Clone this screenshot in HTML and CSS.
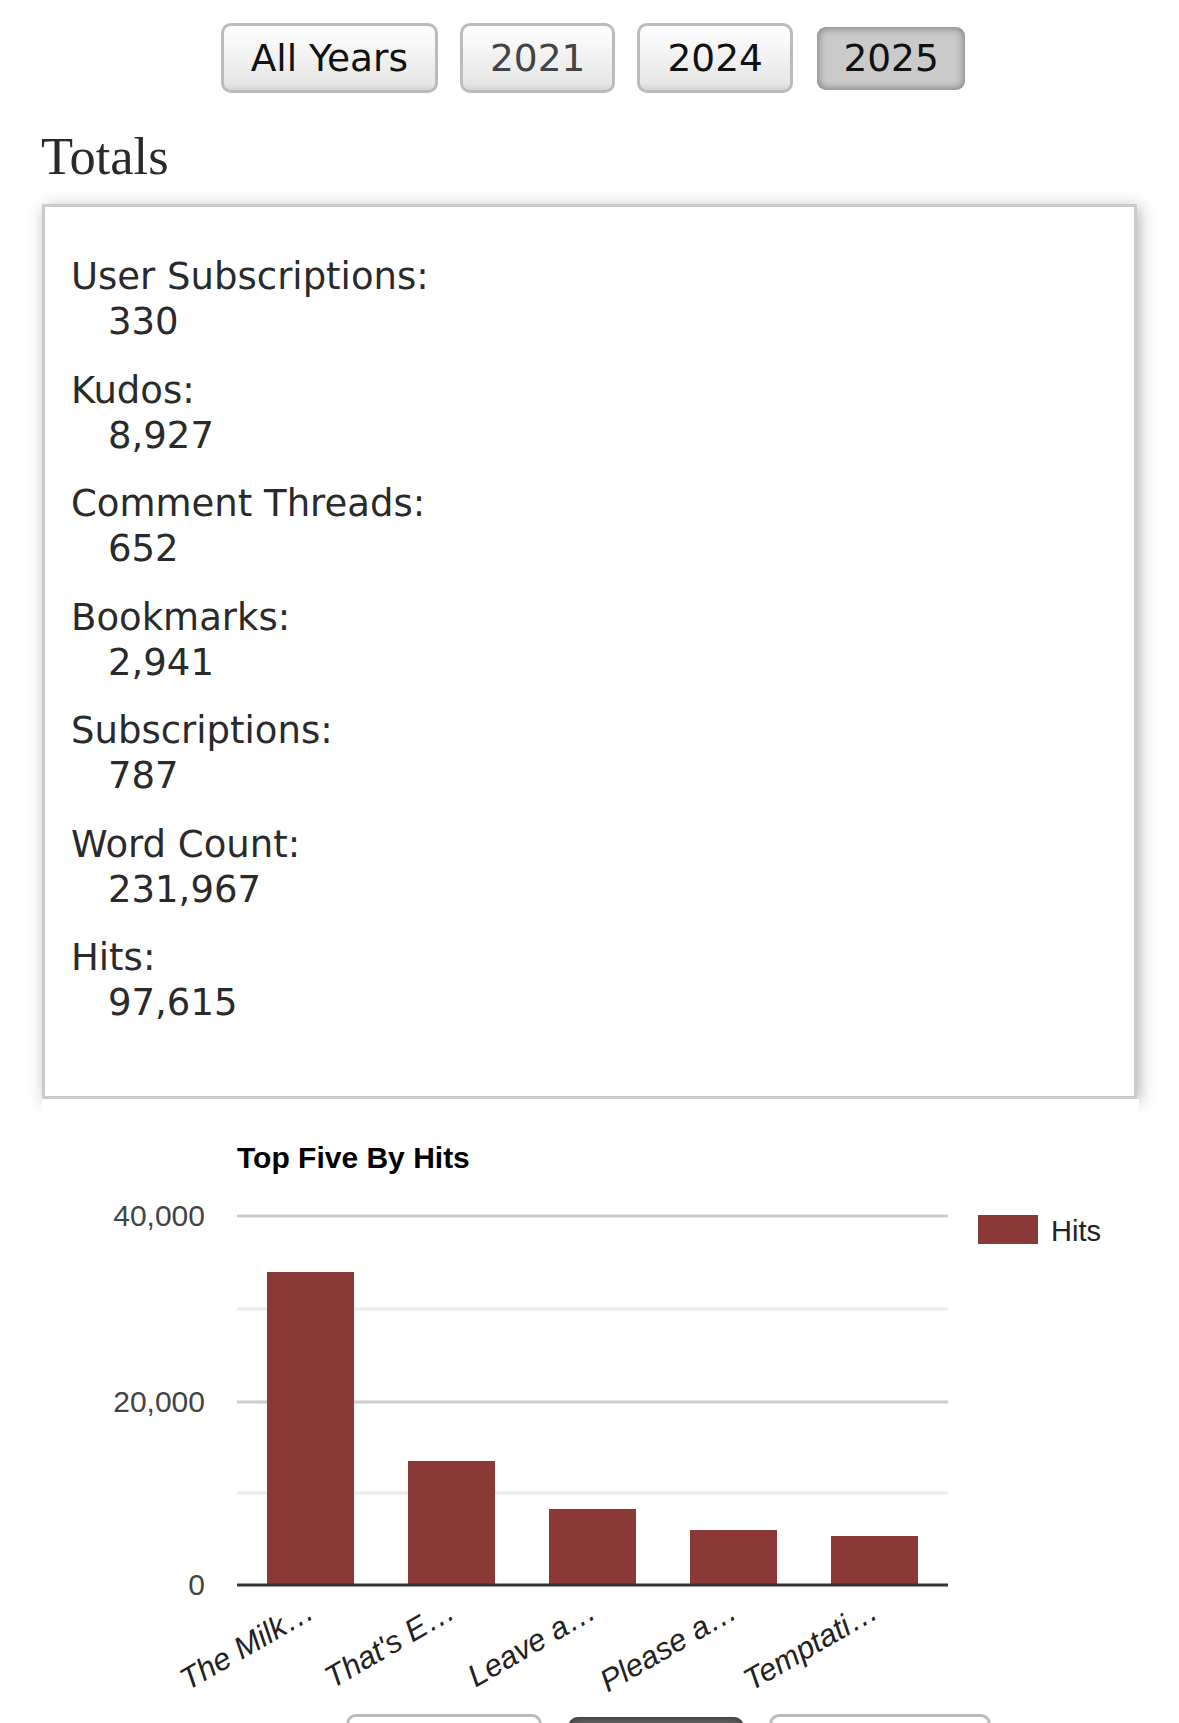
FILE: index.html
```html
<!DOCTYPE html>
<html lang="en">
<head>
<meta charset="utf-8">
<title>Stats</title>
<link rel="stylesheet" href="styles.css">
</head>
<body>
<ul class="years">
  <li><a class="btn">All Years</a></li>
  <li><a class="btn visited">2021</a></li>
  <li><a class="btn">2024</a></li>
  <li><span class="btn current">2025</span></li>
</ul>

<h3 class="heading">Totals</h3>

<div class="wrapper">
  <dl class="stats">
    <dt>User Subscriptions:</dt><dd>330</dd>
    <dt>Kudos:</dt><dd>8,927</dd>
    <dt>Comment Threads:</dt><dd>652</dd>
    <dt>Bookmarks:</dt><dd>2,941</dd>
    <dt>Subscriptions:</dt><dd>787</dd>
    <dt>Word Count:</dt><dd>231,967</dd>
    <dt>Hits:</dt><dd>97,615</dd>
  </dl>
</div>

<div class="chart">
  <svg class="chart-svg" width="1097" height="600" viewBox="0 0 1097 600">
    <text class="title" x="195" y="69">Top Five By Hits</text>

    <line class="grid" x1="195" y1="117" x2="906" y2="117"/>
    <line class="minor" x1="195" y1="210" x2="906" y2="210"/>
    <line class="grid" x1="195" y1="303" x2="906" y2="303"/>
    <line class="minor" x1="195" y1="394" x2="906" y2="394"/>

    <text class="ylab" x="163" y="127">40,000</text>
    <text class="ylab" x="163" y="313">20,000</text>
    <text class="ylab" x="163" y="496">0</text>

    <rect class="bar" x="225" y="173" width="87" height="313"/>
    <rect class="bar" x="366" y="362" width="87" height="124"/>
    <rect class="bar" x="507" y="410" width="87" height="76"/>
    <rect class="bar" x="648" y="431" width="87" height="55"/>
    <rect class="bar" x="789" y="437" width="87" height="49"/>

    <line class="base" x1="195" y1="486" x2="906" y2="486"/>

    <rect class="bar" x="936" y="116" width="60" height="29"/>
    <text class="legend" x="1009" y="142">Hits</text>

    <text class="xlab" x="274" y="518" transform="rotate(-30 274 518)">The Milk…</text>
    <text class="xlab" x="415" y="518" transform="rotate(-30 415 518)">That's E…</text>
    <text class="xlab" x="556" y="518" transform="rotate(-30 556 518)">Leave a…</text>
    <text class="xlab" x="697" y="518" transform="rotate(-30 697 518)">Please a…</text>
    <text class="xlab" x="838" y="518" transform="rotate(-30 838 518)">Temptati…</text>
  </svg>
</div>

<div class="options">
  <span class="btn opt opt-1"></span>
  <span class="btn opt opt-2 dark"></span>
  <span class="btn opt opt-3"></span>
</div>
</body>
</html>
```

FILE: styles.css
```css
html, body {
  margin: 0;
  padding: 0;
  background: #fff;
}

body {
  font-family: "DejaVu Sans", Verdana, sans-serif;
  color: #2a2a2a;
  overflow: hidden;
}

.years {
  list-style: none;
  margin: 23px 0 0 0;
  padding: 0 0 0 7px;
  display: flex;
  justify-content: center;
  align-items: center;
  gap: 22px;
  height: 70px;
}

.years li {
  display: flex;
  align-items: center;
}

.btn {
  display: inline-flex;
  align-items: center;
  justify-content: center;
  box-sizing: border-box;
  height: 70px;
  padding: 0 27px;
  font-size: 37.5px;
  color: #111;
  border: 3px solid #bbb;
  border-radius: 10px;
  background: linear-gradient(#fff 2%, #e6e6e6 90%, #d4d4d4 100%);
  text-decoration: none;
}

.btn.visited {
  color: #444;
}

.btn.current {
  height: 63px;
  margin-left: 2px;
  padding: 0 26.5px;
  border: none;
  border-radius: 9px;
  background: #cacaca;
  box-shadow: inset 0 0 8px 1px #7a7a7a;
  color: #111;
}

.heading {
  font-family: "Liberation Serif", "Times New Roman", serif;
  font-weight: normal;
  font-size: 52.5px;
  line-height: 60px;
  color: #2a2a2a;
  margin: 33px 0 18px 41px;
}

.wrapper {
  margin: 0 42px;
  border: 3px solid #cbcbcb;
  box-shadow: 3px 3px 15px #b5b5b5;
  background: #fff;
}

.stats {
  margin: 0;
  padding: 47px 24px 47px 26px;
  font-size: 37px;
  line-height: 45px;
}

.stats dt {
  margin: 0;
}

.stats dd {
  margin: 0 0 23.5px 37px;
}

.chart {
  position: relative;
  margin: 0 40px 0 42px;
  background: #fff;
  height: 600px;
}

.chart-svg {
  display: block;
  font-family: "Liberation Sans", Arial, sans-serif;
}

.title {
  font-size: 30px;
  font-weight: bold;
  fill: #000;
}

.grid {
  stroke: #cccccc;
  stroke-width: 3;
}

.minor {
  stroke: #ebebeb;
  stroke-width: 3;
}

.base {
  stroke: #333;
  stroke-width: 3;
}

.bar {
  fill: #8b3937;
}

.ylab {
  font-size: 30px;
  fill: #444;
  text-anchor: end;
}

.legend {
  font-size: 29px;
  fill: #222;
}

.xlab {
  font-size: 31px;
  font-style: italic;
  fill: #222;
  text-anchor: end;
}

.options {
  display: flex;
  align-items: flex-start;
  gap: 26px;
  margin: 15px 0 0 346px;
}

.opt {
  height: 70px;
  padding: 0;
}

.opt-1 { width: 196px; }
.opt-2 { width: 176px; }
.opt-3 { width: 222px; margin-left: -1px; }

.opt.dark {
  margin-top: 3px;
  border: none;
  background: linear-gradient(#555, #777 30%, #666);
  box-shadow: inset 0 0 6px #333;
}
```
